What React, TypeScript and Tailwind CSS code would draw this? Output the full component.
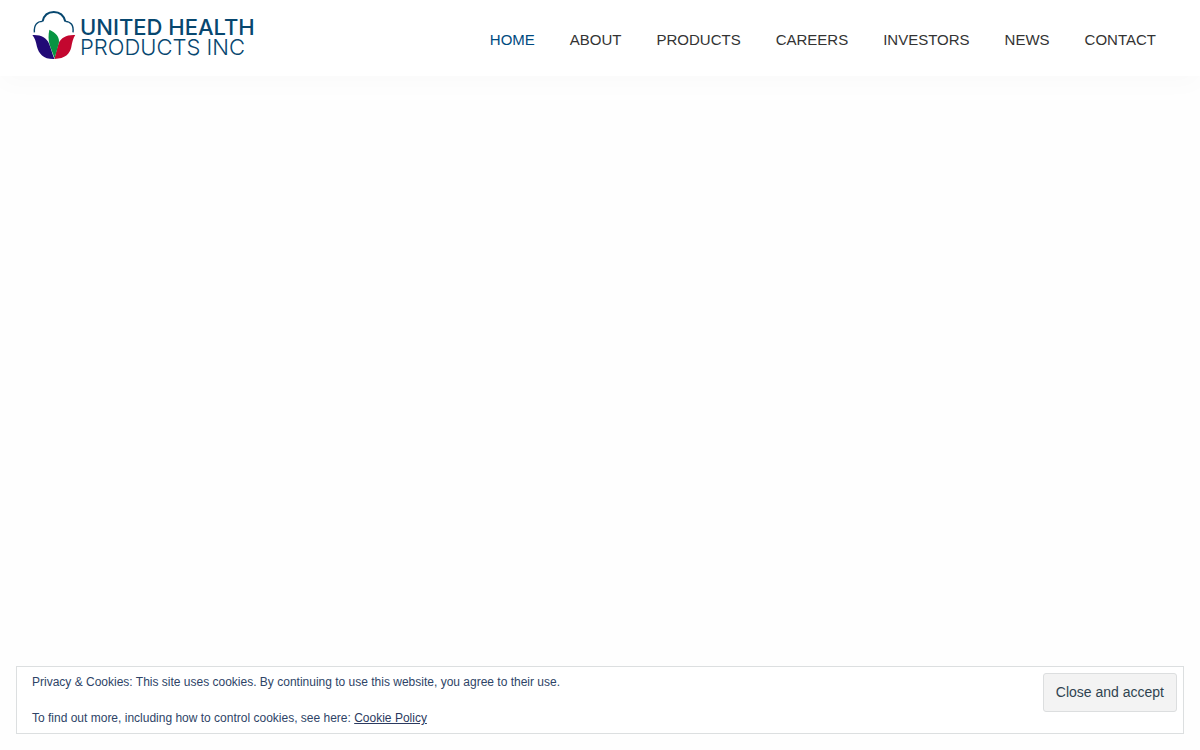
const links = ["HOME", "ABOUT", "PRODUCTS", "CAREERS", "INVESTORS", "NEWS", "CONTACT"];

function Emblem() {
  return (
    <svg viewBox="0 0 44 50" className="h-[50px] w-11 shrink-0" aria-hidden="true">
      <g fill="none" stroke="#07476f">
        <path d="M10.6 11.4C12 4.8 16.4 2 21.8 2S31.6 4.8 33.3 11.4" strokeWidth="2" />
        <path d="M10.6 11.4C5 11.4 1.8 15 2.4 22.4" strokeWidth="1.4" />
        <path d="M33.3 11.4C39 11.8 41.8 15 41 22.4" strokeWidth="1.4" />
      </g>
      <path d="M0.4 25.1C9 24.6 14.6 28 17 33.4C19 38.2 20.2 43.6 22.4 49C11.4 49.3 6.8 43.6 4.9 36.4C3.9 31.6 2.9 28.2 0.4 25.1Z" fill="#210a76" />
      <path d="M43.2 25.1C34.6 24.6 29.2 27.8 26.8 33C24.9 38.2 23.8 43.6 22.4 49C33.4 48.8 37.8 43.8 39.2 37.6C40.3 31.8 41.2 28.4 43.2 25.1Z" fill="#c3072f" />
      <path d="M17.4 19.7C23.8 22.6 27.9 27.4 26.9 32.8C25.7 37.2 24.2 42.4 22.6 48.2C20.8 44 19.4 39.6 17.8 35.2C16.2 30.4 16.2 24.6 17.4 19.7Z" fill="#079442" />
    </svg>
  );
}

export default function App() {
  return (
    <div className="flex min-h-screen flex-col bg-[#fefefe] font-['Liberation_Sans',Arial,sans-serif]">
      <header className="flex h-19 items-start justify-between bg-white pr-11 pl-8 shadow-[0_8px_24px_rgba(0,0,0,0.02)]">
        <a href="#home" className="flex gap-1 pt-[10px] text-[#07476f]">
          <Emblem />
          <span className="flex flex-col pt-[7px] font-[Inter,sans-serif] text-[22px] leading-5 whitespace-nowrap">
            <span className="font-medium">UNITED HEALTH</span>
            <span className="font-light">PRODUCTS INC</span>
          </span>
        </a>
        <nav aria-label="Main" className="pt-7">
          <ul className="flex gap-[35px] text-[15px] leading-6">
            {links.map((label) => (
              <li key={label}>
                <a
                  href={`#${label.toLowerCase()}`}
                  aria-current={label === "HOME" ? "page" : undefined}
                  className="text-[#333333] aria-[current=page]:text-[#004a80]"
                >
                  {label}
                </a>
              </li>
            ))}
          </ul>
        </nav>
      </header>
      <main className="flex-1" />
      <aside
        aria-label="Cookie notice"
        className="mx-4 mb-4 flex items-start justify-between border border-[#dcdfe0] bg-white py-1.5 pr-1.5 pl-[15px] text-xs leading-[18px] text-[#2e4467]"
      >
        <div className="flex flex-col gap-[18px]">
          <p>Privacy &amp; Cookies: This site uses cookies. By continuing to use this website, you agree to their use.</p>
          <p>
            To find out more, including how to control cookies, see here:{" "}
            <a href="#cookie-policy" className="text-[#2b3a60] underline">Cookie Policy</a>
          </p>
        </div>
        <button
          type="button"
          className="rounded-[3px] border border-[#dcdedf] bg-[#f3f3f3] px-3 py-2 text-sm leading-[21px] text-[#2f4350]"
        >
          Close and accept
        </button>
      </aside>
    </div>
  );
}
